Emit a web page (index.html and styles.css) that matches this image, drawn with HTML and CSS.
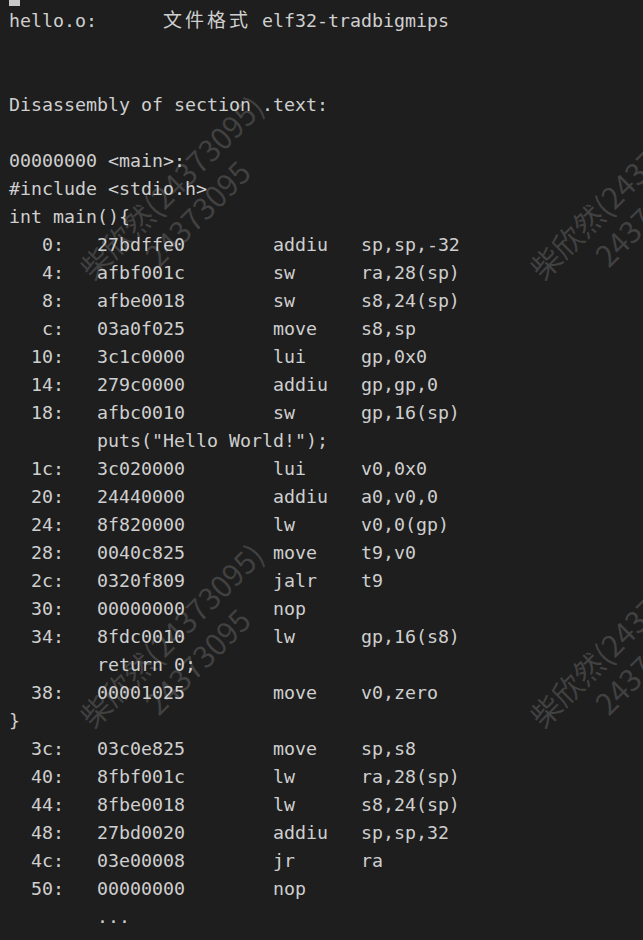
FILE: index.html
```html
<!DOCTYPE html>
<html lang="zh">
<head>
<meta charset="utf-8">
<title>objdump</title>
<link rel="stylesheet" href="styles.css">
</head>
<body>
<div class="terminal">
<div class="cursor"></div>
<pre class="out">hello.o:      <span class="cjk">文件格式</span> elf32-tradbigmips


Disassembly of section .text:

00000000 &lt;main&gt;:
#include &lt;stdio.h&gt;
int main(){
   0:   27bdffe0        addiu   sp,sp,-32
   4:   afbf001c        sw      ra,28(sp)
   8:   afbe0018        sw      s8,24(sp)
   c:   03a0f025        move    s8,sp
  10:   3c1c0000        lui     gp,0x0
  14:   279c0000        addiu   gp,gp,0
  18:   afbc0010        sw      gp,16(sp)
        puts("Hello World!");
  1c:   3c020000        lui     v0,0x0
  20:   24440000        addiu   a0,v0,0
  24:   8f820000        lw      v0,0(gp)
  28:   0040c825        move    t9,v0
  2c:   0320f809        jalr    t9
  30:   00000000        nop
  34:   8fdc0010        lw      gp,16(s8)
        return 0;
  38:   00001025        move    v0,zero
}
  3c:   03c0e825        move    sp,s8
  40:   8fbf001c        lw      ra,28(sp)
  44:   8fbe0018        lw      s8,24(sp)
  48:   27bd0020        addiu   sp,sp,32
  4c:   03e00008        jr      ra
  50:   00000000        nop
        ...</pre>
</div>
<div class="wm wm-a">柴欣然(24373095)<br>24373095</div>
<div class="wm wm-b">柴欣然(24373095)<br>24373095</div>
<div class="wm wm-c">柴欣然(24373095)<br>24373095</div>
<div class="wm wm-d">柴欣然(24373095)<br>24373095</div>
</body>
</html>
```
FILE: styles.css
```css
html {
  margin: 0;
  padding: 0;
  background: #1e1e1e;
  overflow: hidden;
}
body {
  margin: 0;
  padding: 0;
  width: 643px;
  height: 940px;
  position: relative;
  overflow: hidden;
}
.terminal {
  padding-left: 9px;
}
.cursor {
  width: 11px;
  height: 6px;
  background: #c8c8c8;
}
.out {
  margin: 0;
  padding-top: 1px;
  font-family: "DejaVu Sans Mono", "Liberation Mono", monospace;
  font-size: 18.27px;
  line-height: 28px;
  color: #cfcfcf;
  white-space: pre;
}
.cjk {
  font-family: "Noto Sans CJK SC", sans-serif;
  font-size: 19px;
  letter-spacing: 3px;
  line-height: 20px;
}
.wm {
  position: absolute;
  width: 300px;
  height: 74px;
  text-align: center;
  font-family: "Noto Sans CJK SC", "Noto Sans", sans-serif;
  font-size: 30px;
  line-height: 37px;
  color: rgba(255, 255, 255, 0.16);
  transform: rotate(-45deg);
  white-space: nowrap;
  pointer-events: none;
  z-index: -1;
}
.wm-a { left: 34px; top: 163px; }
.wm-b { left: 484px; top: 163px; }
.wm-c { left: 34px; top: 611px; }
.wm-d { left: 484px; top: 611px; }
```
